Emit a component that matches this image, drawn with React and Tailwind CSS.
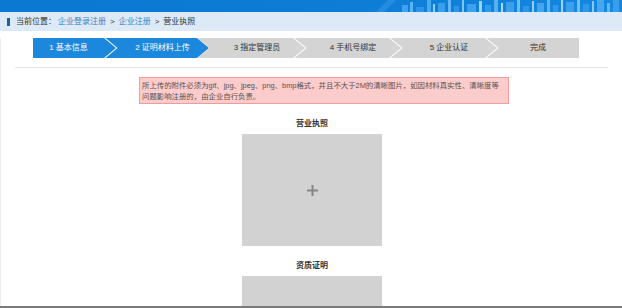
import React from 'react';

const bars = [
  [402, 6, 7, '#3fa2ee'], [410, 3, 10, '#5ab4f3'], [416, 8, 5, '#2e95e6'], [427, 4, 12, '#4aaaf0'],
  [433, 2, 8, '#8fcff8'], [438, 7, 9, '#3a9eec'], [448, 3, 12, '#62b8f4'], [454, 5, 6, '#2f96e8'],
  [462, 2, 12, '#7cc6f7'], [467, 9, 8, '#3ea1ee'], [479, 3, 11, '#9bd4f9'], [485, 6, 7, '#3199e9'],
  [494, 4, 12, '#55b1f2'], [501, 2, 9, '#a6dafa'], [506, 8, 10, '#3b9fed'], [517, 3, 12, '#6bbdf5'],
  [523, 6, 6, '#2f97e8'], [532, 2, 11, '#8fcff8'], [537, 7, 9, '#44a6ef'], [547, 3, 12, '#5db6f3'],
  [553, 5, 7, '#3299e9'], [561, 2, 12, '#9bd4f9'], [566, 8, 10, '#3ca0ed'], [577, 3, 12, '#6fc0f5'],
  [583, 6, 8, '#3099e8'], [592, 2, 11, '#86cbf7'], [597, 7, 12, '#47a8f0'], [607, 3, 9, '#5fb7f4'],
  [613, 6, 12, '#3a9eec'],
];

function Banner() {
  return (
    <svg width="622" height="12" viewBox="0 0 622 12" className="block">
      <defs>
        <linearGradient id="bg" x1="0" y1="0" x2="1" y2="0">
          <stop offset="0" stopColor="#0b78d2" />
          <stop offset="0.6" stopColor="#0d7dd6" />
          <stop offset="1" stopColor="#1688e0" />
        </linearGradient>
      </defs>
      <rect width="622" height="12" fill="url(#bg)" />
      <polygon points="388,0 396,0 384,12 376,12" fill="#2a8fe2" opacity="0.8" />
      {bars.map(([x, w, h, c], i) => (
        <rect key={i} x={x} y={12 - h} width={w} height={h} fill={c} />
      ))}
    </svg>
  );
}

const steps = [
  { label: '1 基本信息', w: 83, active: true, cls: 'pr-[12px] [clip-path:polygon(0_0,calc(100%_-_12px)_0,100%_50%,calc(100%_-_12px)_100%,0_100%)]' },
  { label: '2 证明材料上传', w: 105, active: true, cls: 'pl-[12px] [clip-path:polygon(1.5px_0,calc(100%_-_12px)_0,100%_50%,calc(100%_-_12px)_100%,1.5px_100%,13.5px_50%)]' },
  { label: '3 指定管理员', w: 108, cls: 'pl-[12px] [clip-path:polygon(0_0,calc(100%_-_12px)_0,100%_50%,calc(100%_-_12px)_100%,0_100%,12px_50%)]' },
  { label: '4 手机号绑定', w: 108, cls: 'pl-[12px] [clip-path:polygon(1.5px_0,calc(100%_-_12px)_0,100%_50%,calc(100%_-_12px)_100%,1.5px_100%,13.5px_50%)]' },
  { label: '5 企业认证', w: 108, cls: 'pl-[12px] [clip-path:polygon(1.5px_0,calc(100%_-_12px)_0,100%_50%,calc(100%_-_12px)_100%,1.5px_100%,13.5px_50%)]' },
  { label: '完成', w: 94, cls: 'pl-[12px] [clip-path:polygon(1.5px_0,100%_0,100%_100%,1.5px_100%,13.5px_50%)]' },
];

function Plus() {
  return (
    <svg width="11" height="11" viewBox="0 0 11 11">
      <rect x="0" y="4.5" width="11" height="2" fill="#858585" />
      <rect x="4.5" y="0" width="2" height="11" fill="#858585" />
    </svg>
  );
}

export default function App() {
  return (
    <div className="w-[622px] h-[308px] overflow-hidden bg-white border-b-2 border-[#7a7a7a] font-['Liberation_Sans','Noto_Sans_CJK_SC',sans-serif]">
      <Banner />
      <div className="h-[19px] bg-[#dceaf7] flex items-center pl-[7px] text-[8px] text-[#333] whitespace-nowrap">
        <div className="w-[3px] h-[8px] bg-[#1b5fa8] mr-[6px]" />
        <span>当前位置：</span>
        <span className="text-[#3f7fbf] ml-[2px]">企业登录注册</span>
        <span className="mx-[4px]">&gt;</span>
        <span className="text-[#3f7fbf]">企业注册</span>
        <span className="mx-[4px]">&gt;</span>
        <span>营业执照</span>
      </div>
      <div className="border-l border-[#ececec] h-full">
        <div className="mt-[7px] ml-[32px] flex h-[20px]">
          {steps.map((s, i) => (
            <div
              key={i}
              style={{ width: s.w }}
              className={`${i > 0 ? '-ml-[12px]' : ''} shrink-0 h-[20px] flex items-center justify-center text-[8px] whitespace-nowrap ${s.active ? 'bg-[#1b88dd] text-white' : 'bg-[#d4d4d4] text-[#333]'} ${s.cls}`}
            >
              {s.label}
            </div>
          ))}
        </div>
        <div className="mt-[9px] ml-[14px] w-[593px] h-px bg-[#e6e6e6]" />
        <div className="mt-[9px] ml-[138px] w-[370px] h-[27px] bg-[#fccbcb] border border-[#f29c9c] px-[2px] pt-[3px] text-[7.4px] leading-[10.5px] text-[#555] whitespace-nowrap">
          所上传的附件必须为gif、jpg、jpeg、png、bmp格式，并且不大于2M的清晰图片，如因材料真实性、清晰度等
          <br />
          问题影响注册的，由企业自行负责。
        </div>
        <div className="mt-[14px] w-[622px] text-center text-[8px] leading-[12px] font-bold text-[#333]">营业执照</div>
        <div className="mt-[4px] ml-[241px] w-[140px] h-[112px] bg-[#d2d2d2] flex items-center justify-center">
          <Plus />
        </div>
        <div className="mt-[14px] w-[622px] text-center text-[8px] leading-[12px] font-bold text-[#333]">资质证明</div>
        <div className="mt-[4px] ml-[241px] w-[140px] h-[112px] bg-[#d2d2d2]" />
      </div>
    </div>
  );
}
